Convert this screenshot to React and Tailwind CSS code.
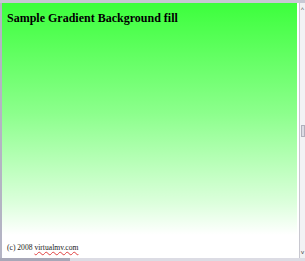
export default function App() {
  return (
    <div className="w-[305px] h-[261px] bg-white flex flex-col overflow-hidden">
      <div className="h-[3px] bg-[#c8c8d4] shrink-0" />
      <div className="flex flex-1 min-h-0">
        <div className="w-[2px] bg-[#b4b4c4] shrink-0" />
        <div
          className="flex-1 flex flex-col justify-between bg-[linear-gradient(to_bottom,#3cff3c_0px,#8cff8c_110px,#dcffdc_200px,#ffffff_232px)] pl-[5px] pt-[8px] pb-[5px]"
          style={{ fontFamily: '"Liberation Serif", "Times New Roman", serif' }}
        >
          <div className="text-[12px] font-bold text-black leading-[15px]">
            Sample Gradient Background fill
          </div>
          <div className="text-[7.6px] text-[#222] leading-[11px]">
            (c) 2008{" "}
            <span className="underline decoration-wavy decoration-[#e04040] decoration-1">
              virtualmv.com
            </span>
          </div>
        </div>
        <div className="w-[2px] bg-white shrink-0" />
        <div className="w-[6px] shrink-0 bg-[#f2f2f4] border-l border-[#c8c8d0] flex flex-col justify-between items-center py-[2px]">
          <div className="text-[6px] leading-[8px] text-[#444]">^</div>
          <div className="w-[4px] h-[12px] bg-[#dcdce4] border border-[#b0b0bc]" />
          <div className="text-[6px] leading-[8px] text-[#444]">v</div>
        </div>
      </div>
      <div className="h-[3px] flex shrink-0">
        <div className="w-[70px] bg-[#a8a8b8]" />
        <div className="flex-1 bg-[#dcdce4]" />
      </div>
    </div>
  );
}
